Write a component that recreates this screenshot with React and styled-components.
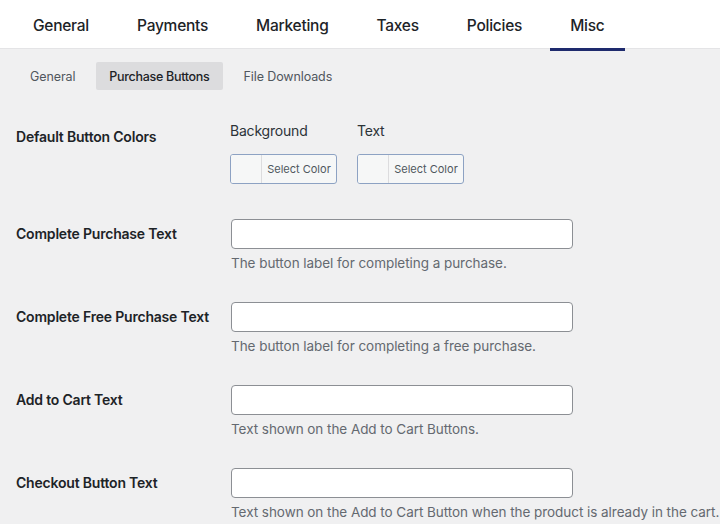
import React from "react";
import styled, { createGlobalStyle } from "styled-components";

const GlobalStyle = createGlobalStyle`
  html, body {
    margin: 0;
    padding: 0;
    background: #f0f0f1;
    font-family: Inter, "Open Sans", "Liberation Sans", sans-serif;
    color: #1d2327;
  }
`;

const Page = styled.div`
  width: 720px;
  height: 524px;
  overflow: hidden;
  background: #f0f0f1;
`;

const TopNav = styled.nav`
  display: flex;
  gap: 8px;
  height: 49px;
  padding: 2px 0 0 13px;
  background: #fff;
  border-bottom: 1px solid #e4e4e6;
  box-sizing: border-box;
`;

const TopTab = styled.a`
  position: relative;
  display: flex;
  align-items: center;
  padding: 0 20px;
  font-size: 15.5px;
  font-weight: 500;
  color: #1d2327;
  letter-spacing: -0.25px;

  &::after {
    content: "";
    position: absolute;
    left: 0;
    right: 0;
    bottom: -3px;
    height: 3px;
    background: ${(p) => (p.$active ? "#1e2a6d" : "transparent")};
  }
`;

const SubNav = styled.div`
  display: flex;
  gap: 8px;
  margin: 13px 0 0 17px;
`;

const SubTab = styled.a`
  display: flex;
  align-items: center;
  height: 28px;
  padding: 0 13px;
  border-radius: 2px;
  font-size: 12.5px;
  letter-spacing: ${(p) => (p.$active ? "-0.3px" : "-0.1px")};
  font-weight: ${(p) => (p.$active ? 500 : 400)};
  color: ${(p) => (p.$active ? "#1d2327" : "#50575e")};
  background: ${(p) => (p.$active ? "#dcdcde" : "transparent")};
`;

const Form = styled.div`
  padding: 31px 0 0 16px;
`;

const Row = styled.div`
  display: grid;
  grid-template-columns: 215px 1fr;
  margin-bottom: ${(p) => p.$space}px;
`;

const Label = styled.div`
  font-size: 14px;
  font-weight: 600;
  line-height: 20px;
  padding-top: ${(p) => p.$offset}px;
  letter-spacing: -0.2px;
`;

const Pickers = styled.div`
  display: flex;
  gap: 20px;
  margin-left: -1px;
`;

const Picker = styled.div`
  display: flex;
  flex-direction: column;
  gap: 13px;
`;

const PickerTitle = styled.span`
  font-size: 14px;
  line-height: 20px;
  color: #2c3338;
  letter-spacing: -0.2px;
`;

const ColorButton = styled.button`
  display: flex;
  align-items: stretch;
  width: 107px;
  height: 30px;
  padding: 0;
  border: 1px solid #8da2c3;
  border-radius: 3px;
  background: #f6f7f7;
  overflow: hidden;
  font-family: inherit;
  cursor: pointer;
`;

const Swatch = styled.span`
  width: 30px;
  background: #f6f7f7;
  border-right: 1px solid #dcdcde;
`;

const ColorText = styled.span`
  flex: 1;
  display: flex;
  align-items: center;
  justify-content: center;
  font-size: 11px;
  color: #50575e;
`;

const Field = styled.div`
  display: flex;
  flex-direction: column;
  gap: 4px;
`;

const TextInput = styled.input`
  width: 342px;
  height: 30px;
  box-sizing: border-box;
  border: 1px solid #8c8f94;
  border-radius: 4px;
  background: #fff;
  padding: 0 8px;
  font-family: inherit;
  font-size: 14px;
`;

const Description = styled.p`
  margin: 0;
  font-size: 13.5px;
  line-height: 20px;
  letter-spacing: -0.05px;
  color: #646970;
  white-space: nowrap;
`;

const topTabs = ["General", "Payments", "Marketing", "Taxes", "Policies", "Misc"];
const subTabs = ["General", "Purchase Buttons", "File Downloads"];

const fields = [
  ["Complete Purchase Text", "The button label for completing a purchase."],
  ["Complete Free Purchase Text", "The button label for completing a free purchase."],
  ["Add to Cart Text", "Text shown on the Add to Cart Buttons."],
  [
    "Checkout Button Text",
    "Text shown on the Add to Cart Button when the product is already in the cart.",
  ],
];

export default function App() {
  return (
    <Page>
      <GlobalStyle />
      <TopNav>
        {topTabs.map((t) => (
          <TopTab key={t} $active={t === "Misc"}>
            {t}
          </TopTab>
        ))}
      </TopNav>
      <SubNav>
        {subTabs.map((t) => (
          <SubTab key={t} $active={t === "Purchase Buttons"}>
            {t}
          </SubTab>
        ))}
      </SubNav>
      <Form>
        <Row $space={35}>
          <Label $offset={6}>Default Button Colors</Label>
          <Pickers>
            {["Background", "Text"].map((name) => (
              <Picker key={name}>
                <PickerTitle>{name}</PickerTitle>
                <ColorButton type="button">
                  <Swatch />
                  <ColorText>Select Color</ColorText>
                </ColorButton>
              </Picker>
            ))}
          </Pickers>
        </Row>
        {fields.map(([label, desc]) => (
          <Row key={label} $space={29}>
            <Label $offset={5}>{label}</Label>
            <Field>
              <TextInput type="text" />
              <Description>{desc}</Description>
            </Field>
          </Row>
        ))}
      </Form>
    </Page>
  );
}
